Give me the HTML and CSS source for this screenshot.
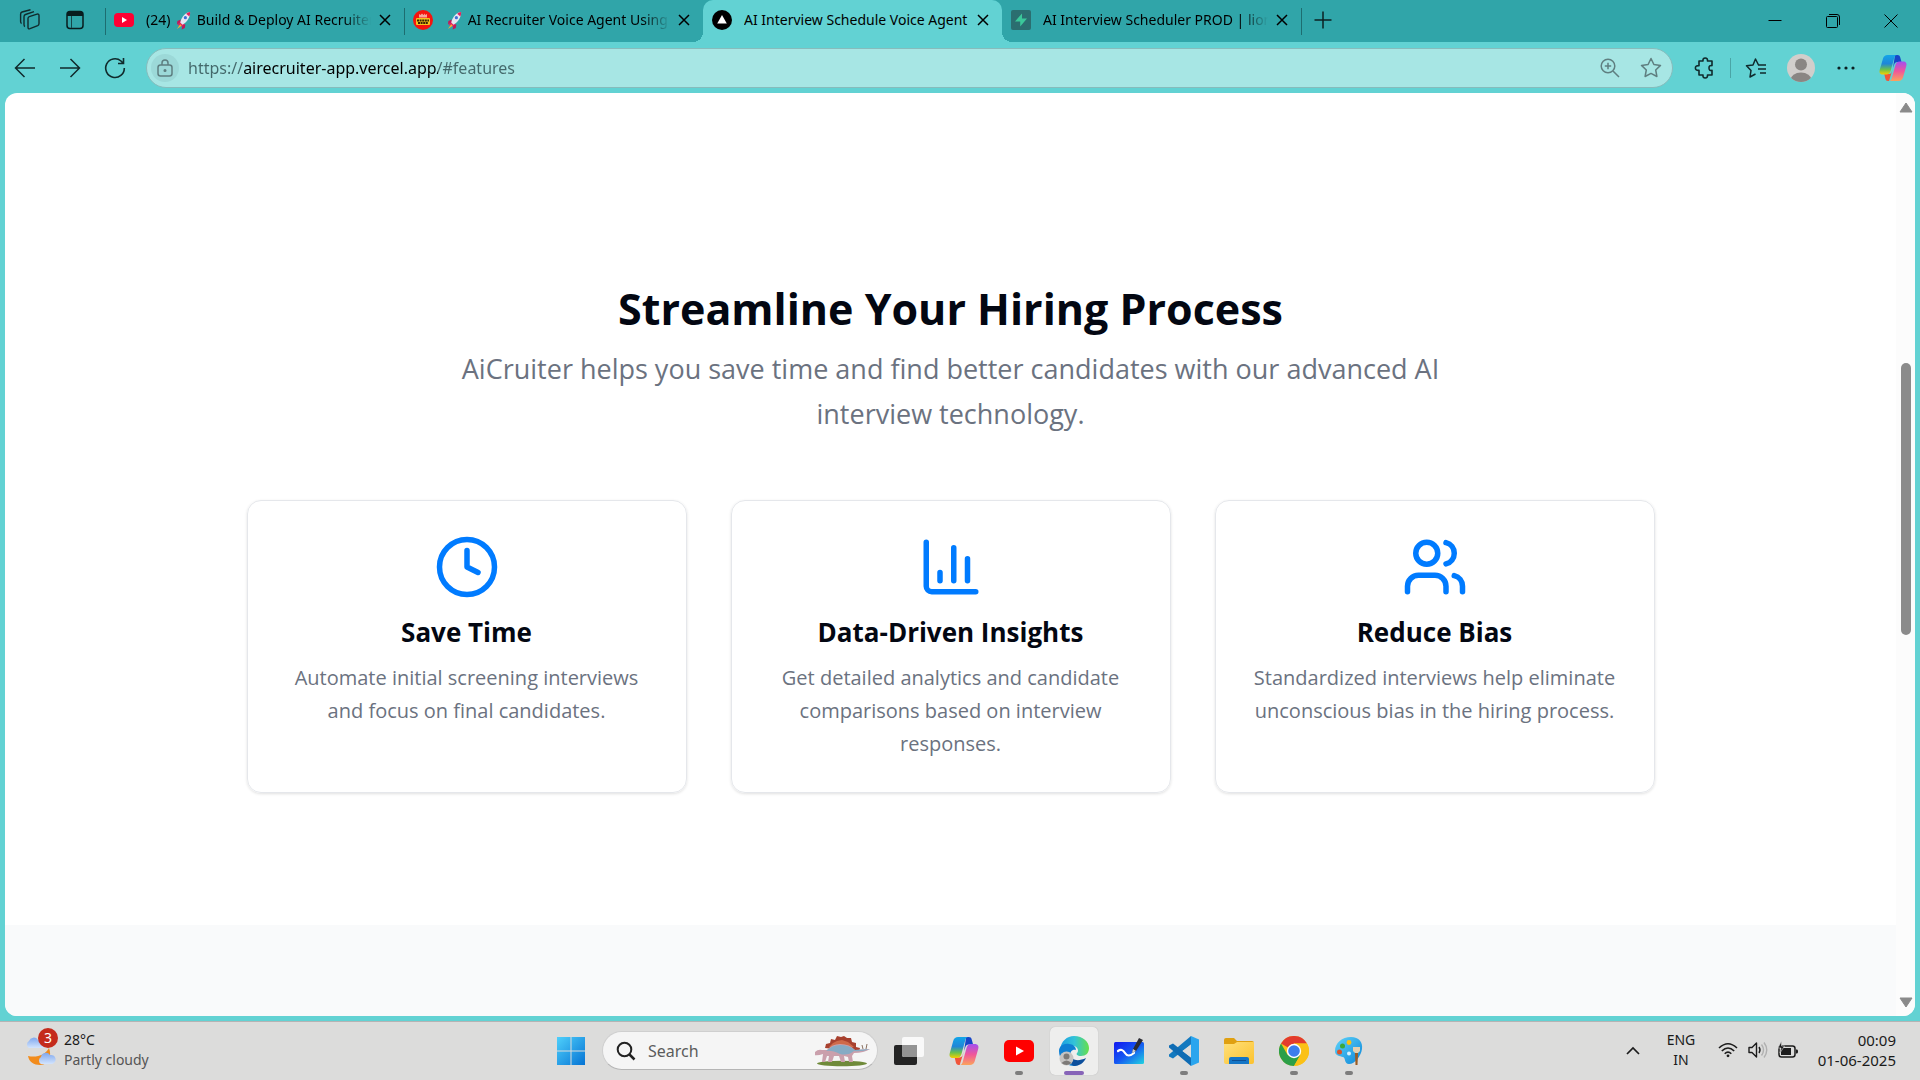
FILE: index.html
```html
<!DOCTYPE html>
<html lang="en">
<head>
<meta charset="utf-8">
<meta name="viewport" content="width=device-width, initial-scale=1">
<title>AI Interview Schedule Voice Agent</title>
<link rel="stylesheet" href="styles.css">
</head>
<body>
<svg class="defs" width="0" height="0" aria-hidden="true">
  <defs>
    <linearGradient id="cp-a" x1="0" y1="0" x2="0" y2="1"><stop offset="0" stop-color="#12a5e8"/><stop offset=".45" stop-color="#1f86d8"/><stop offset=".75" stop-color="#6cc24a"/><stop offset="1" stop-color="#f5d000"/></linearGradient>
    <linearGradient id="cp-b" x1="0" y1="0" x2="0" y2="1"><stop offset="0" stop-color="#a34ff0"/><stop offset=".5" stop-color="#f0569a"/><stop offset="1" stop-color="#fba35c"/></linearGradient>
    <linearGradient id="win" x1="0" y1="0" x2="1" y2="1"><stop offset="0" stop-color="#4fd0fb"/><stop offset="1" stop-color="#0573d4"/></linearGradient>
    <linearGradient id="edge-a" x1="0" y1="0" x2="1" y2="0"><stop offset="0" stop-color="#1b9de2"/><stop offset=".5" stop-color="#33c3d8"/><stop offset="1" stop-color="#66e04a"/></linearGradient>
    <linearGradient id="wb" x1="0" y1="0" x2="1" y2="1"><stop offset="0" stop-color="#1218f0"/><stop offset=".5" stop-color="#1457f2"/><stop offset="1" stop-color="#22d4e0"/></linearGradient>
    <linearGradient id="fold" x1="0" y1="0" x2="1" y2="1"><stop offset="0" stop-color="#ffe07a"/><stop offset="1" stop-color="#fcc22e"/></linearGradient>
    <linearGradient id="paint" x1="0" y1="0" x2="1" y2="1"><stop offset="0" stop-color="#5fd4fa"/><stop offset="1" stop-color="#0c86d8"/></linearGradient>
    <linearGradient id="cloud" x1="0" y1="0" x2="0" y2="1"><stop offset="0" stop-color="#7fa8ee"/><stop offset="1" stop-color="#d3e4fd"/></linearGradient>
    <symbol id="copilot" viewBox="0 0 28 28">
      <path d="M16 1h2.500c1.500 0 2.300.8 2.700 2.200L22.500 8h-4c-2 0-2.800 1-3.300 2.600L14 14z" fill="#1746c8"/>
      <path d="M10 27h-1c-1.500 0-2.200-.8-2.600-2.200L5.300 20h4.200c2 0 2.800-1 3.300-2.600L14 14z" fill="#f1553a"/>
      <path d="M8.500 1H18c-1.500 0-2.200 1-2.700 2.500L11.600 17c-.7 2.200-1.800 3.500-4.300 3.500H4C1 20.500 0 18.500.7 16L4 4.500C4.700 2.200 6.200 1 8.500 1z" fill="url(#cp-a)"/>
      <path d="M19.500 27H10c1.500 0 2.200-1 2.700-2.500L16.400 11c.7-2.200 1.800-3.500 4.300-3.500H24c3 0 4 2 3.300 4.500L24 23.500c-.7 2.300-2.200 3.500-4.500 3.500z" fill="url(#cp-b)"/>
    </symbol>
    <symbol id="rocket" viewBox="0 0 16 20">
      <path d="M1.500 14.500L5 10l5 5-4.500 1.500z" fill="#e0245e"/>
      <path d="M4.500 12C6 6 10 1.500 15 1c.5 5-3 10.500-8 13.500z" fill="#e6e7f2"/>
      <path d="M15 1c-1.600.2-3 .8-4.200 1.800l3.400 3C15 4.200 15.200 2.500 15 1z" fill="#e0245e"/>
      <circle cx="10" cy="7" r="1.700" fill="#3f6fd8"/>
      <path d="M5 9L1.500 10.500 1 14l3-1.500zM10 14l-.6 4L6 19.500l.7-4z" fill="#c2185b"/>
      <path d="M4.500 14L1 19l5-3.500z" fill="#ffb02e"/>
    </symbol>
    <symbol id="close" viewBox="0 0 12 12"><path d="M1 1l10 10M11 1L1 11" fill="none" stroke="currentColor" stroke-width="1.500"/></symbol>
    <symbol id="youtube" viewBox="0 0 30 22"><rect width="30" height="22" rx="5" fill="#f00"/><path d="M12 6.500v9l8-4.500z" fill="#fff"/></symbol>
  </defs>
</svg>

<header class="tabstrip">
  <div class="strip-tools">
    <button class="bare" aria-label="Workspaces"><svg width="22" height="22" viewBox="0 0 22 22" fill="none" stroke="#102a2c" stroke-width="1.400" stroke-linejoin="round"><path d="M9 9.500q0-1.500 1.300-1.900l7.700-2.500q2-.5 2 1.500v8q0 1.500-1.300 2.100l-7.700 3q-2 .6-2-1.400z"/><path d="M6 17.500q-1-.4-1-2V7.700q0-1.600 1.500-2.200L15 2.600M2.600 14.500q-1-.5-1-2V5.200q0-1.600 1.500-2.200L11.500.8"/></svg></button>
    <button class="bare" aria-label="Tab actions"><svg width="20" height="20" viewBox="0 0 20 20"><rect x="2" y="1.500" width="16" height="17" rx="3" fill="none" stroke="#081c1e" stroke-width="1.500"/><path d="M2 6V4q0-2.500 3-2.500h10q3 0 3 2.500v2z" fill="#081c1e"/><path d="M6.500 6v12" stroke="#17464a"/></svg></button>
  </div>
  <nav class="tabs" aria-label="Open tabs">
    <div class="tab">
      <svg class="favicon" width="20" height="20" viewBox="0 0 20 20"><rect y="3" width="20" height="14" rx="4" fill="#ff0033"/><path d="M8 7v6l5-3z" fill="#fff"/></svg>
      <button class="tab-title">(24) <svg class="emoji" width="15" height="19"><use href="#rocket"/></svg> Build &amp; Deploy AI Recruiter Voice Agent</button>
      <button class="bare" aria-label="Close tab"><svg width="12" height="12"><use href="#close"/></svg></button>
    </div>
    <div class="tab">
      <svg class="favicon" width="20" height="20" viewBox="0 0 20 20"><circle cx="10" cy="10" r="10" fill="#f5140e"/><path d="M6 7.500V4l1.500 1L9 3.500 10.500 5 12 3.500V5l2-1v3.500z" fill="#f7a79a"/><rect x="3" y="8" width="14" height="7" rx="1" fill="#f6c21c"/><path d="M4 10.500h12M5 13h10" stroke="#3b2500" stroke-width="1.800" stroke-dasharray="2 .6"/></svg>
      <button class="tab-title"><svg class="emoji" width="15" height="19"><use href="#rocket"/></svg> AI Recruiter Voice Agent Using Next.js</button>
      <button class="bare" aria-label="Close tab"><svg width="12" height="12"><use href="#close"/></svg></button>
    </div>
    <div class="tab active">
      <svg class="favicon" width="20" height="20" viewBox="0 0 20 20"><circle cx="10" cy="10" r="10" fill="#000"/><path d="M10 5l4.800 8.500H5.200z" fill="#fff"/></svg>
      <button class="tab-title full" aria-current="page">AI Interview Schedule Voice Agent</button>
      <button class="bare" aria-label="Close tab"><svg width="12" height="12"><use href="#close"/></svg></button>
    </div>
    <div class="tab">
      <svg class="favicon" width="20" height="20" viewBox="0 0 20 20"><rect width="20" height="20" rx="2" fill="#2b6e70"/><path d="M11 3.500L4 11.500h5.200v5L16 8.500h-5z" fill="#3bc79a"/></svg>
      <button class="tab-title">AI Interview Scheduler PROD | lionheart</button>
      <button class="bare" aria-label="Close tab"><svg width="12" height="12"><use href="#close"/></svg></button>
    </div>
    <button class="bare new-tab" aria-label="New tab"><svg width="18" height="18" viewBox="0 0 18 18" stroke="#0b2022" stroke-width="1.500"><path d="M9 .5v17M.5 9h17"/></svg></button>
  </nav>
  <div class="window-controls">
    <button class="bare" aria-label="Minimize"><svg width="14" height="14" viewBox="0 0 14 14" stroke="#000"><path d="M.5 6.500h13"/></svg></button>
    <button class="bare" aria-label="Restore"><svg width="14" height="14" viewBox="0 0 14 14" fill="none" stroke="#000"><rect x=".5" y="2.500" width="11" height="11" rx="1"/><path d="M3 .5h8q2.500 0 2.500 2.500v8"/></svg></button>
    <button class="bare" aria-label="Close window"><svg width="14" height="14" viewBox="0 0 14 14" stroke="#000"><path d="M.5.5l13 13M13.500.5l-13 13"/></svg></button>
  </div>
</header>

<div class="toolbar">
  <div class="nav-buttons">
    <button class="bare" aria-label="Back"><svg width="22" height="20" viewBox="0 0 22 20" fill="none" stroke="#102a2c" stroke-width="1.500"><path d="M21 10H2M10.500 1l-9 9 9 9"/></svg></button>
    <button class="bare" aria-label="Forward"><svg width="22" height="20" viewBox="0 0 22 20" fill="none" stroke="#102a2c" stroke-width="1.500"><path d="M1 10h19M11.500 1l9 9-9 9"/></svg></button>
    <button class="bare" aria-label="Refresh"><svg width="22" height="22" viewBox="0 0 22 22" fill="none" stroke="#102a2c" stroke-width="1.600"><path d="M20.300 11A9.300 9.300 0 1 1 17 4l2 2M19.500 1v5.500H14"/></svg></button>
  </div>
  <div class="address">
    <button class="bare lock" aria-label="Site information"><svg width="16" height="18" viewBox="0 0 16 18" fill="none" stroke="#5d7f80" stroke-width="1.500"><rect x="1" y="6" width="14" height="11" rx="2.500"/><path d="M5 6V4a3 3 0 0 1 6 0v2"/><circle cx="8" cy="11.500" r=".8" fill="#5d7f80"/></svg></button>
    <input class="url" type="text" aria-label="Address" value="https://airecruiter-app.vercel.app/#features">
    <button class="bare" aria-label="Zoom"><svg width="20" height="20" viewBox="0 0 20 20" fill="none" stroke="#5f7f80" stroke-width="1.500"><circle cx="8" cy="8" r="6.800"/><path d="M13 13l6 6M8 4.800v6.400M4.800 8h6.400"/></svg></button>
    <button class="bare" aria-label="Add to favorites"><svg width="22" height="22" viewBox="0 0 22 22" fill="none" stroke="#5f7f80" stroke-width="1.500" stroke-linejoin="round"><path d="M11 1.500l2.900 6 6.600.9-4.800 4.600 1.200 6.500L11 16.400l-5.900 3.100L6.300 13 1.500 8.400l6.600-.9z"/></svg></button>
  </div>
  <div class="toolbar-actions">
    <button class="bare" aria-label="Extensions"><svg width="22" height="22" viewBox="0 0 22 22" fill="none" stroke="#102a2c" stroke-width="1.600" stroke-linejoin="round"><path d="M5 4h4q-.4-3 2.200-3t2.300 3H18v4.600q-3-.5-3 2.400t3 2.400V18h-4.500q.3 3-2.300 3T9 18H5v-4.600q-3.600.2-3.600-2.400T5 8.600z"/></svg></button>
    <span class="divider"></span>
    <button class="bare" aria-label="Favorites"><svg width="22" height="20" viewBox="0 0 22 20" fill="none" stroke="#102a2c" stroke-width="1.500" stroke-linejoin="round"><path d="M13.500 7L10.500 1 8 7l-6.500.8L6 12.500 5 19l5.500-3M13 7h8M13 11h8M15 15h6"/></svg></button>
    <button class="bare profile" aria-label="Profile"><svg width="28" height="28" viewBox="0 0 28 28"><clipPath id="av"><circle cx="14" cy="14" r="14"/></clipPath><g clip-path="url(#av)"><rect width="28" height="28" fill="#d1cecb"/><circle cx="14" cy="10.500" r="6" fill="#8a8683"/><ellipse cx="14" cy="26" rx="10.500" ry="7.500" fill="#8a8683"/></g></svg></button>
    <button class="bare" aria-label="Settings and more"><svg width="18" height="4" viewBox="0 0 18 4" fill="#0b2022"><circle cx="2" cy="2" r="1.600"/><circle cx="9" cy="2" r="1.600"/><circle cx="16" cy="2" r="1.600"/></svg></button>
    <button class="bare assistant" aria-label="Copilot"><svg width="28" height="28"><use href="#copilot"/></svg></button>
  </div>
</div>

<div class="viewport">
  <main class="page">
    <section class="features" id="features">
      <h2>Streamline Your Hiring Process</h2>
      <p class="lead">AiCruiter helps you save time and find better candidates with our advanced AI interview technology.</p>
      <div class="cards">
        <article class="card">
          <svg class="card-icon" viewBox="0 0 24 24"><circle cx="12" cy="12" r="10"/><path d="M12 6v6l4 2"/></svg>
          <h3>Save Time</h3>
          <p>Automate initial screening interviews and focus on final candidates.</p>
        </article>
        <article class="card">
          <svg class="card-icon" viewBox="0 0 24 24"><path d="M3 3v16a2 2 0 0 0 2 2h16M18 17V9M13 17V5M8 17v-3"/></svg>
          <h3>Data-Driven Insights</h3>
          <p>Get detailed analytics and candidate comparisons based on interview responses.</p>
        </article>
        <article class="card">
          <svg class="card-icon" viewBox="0 0 24 24"><path d="M16 21v-2a4 4 0 0 0-4-4H6a4 4 0 0 0-4 4v2"/><circle cx="9" cy="7" r="4"/><path d="M22 21v-2a4 4 0 0 0-3-3.870M16 3.130a4 4 0 0 1 0 7.750"/></svg>
          <h3>Reduce Bias</h3>
          <p>Standardized interviews help eliminate unconscious bias in the hiring process.</p>
        </article>
      </div>
    </section>
    <section class="next-section"></section>
  </main>
  <div class="scrollbar" aria-hidden="true">
    <svg width="14" height="11" viewBox="0 0 14 11"><path d="M7 1l6 9H1z" fill="#8a8a8a" stroke="#8a8a8a" stroke-linejoin="round"/></svg>
    <div class="track"><div class="thumb"></div></div>
    <svg width="14" height="11" viewBox="0 0 14 11"><path d="M7 10l6-9H1z" fill="#8a8a8a" stroke="#8a8a8a" stroke-linejoin="round"/></svg>
  </div>
</div>

<footer class="taskbar">
  <button class="bare weather">
    <svg width="31" height="36" viewBox="0 0 31 36"><path d="M3 24c9 2 17-1 21-8 3 8 0 17-9 17-6 0-11-3-12-9z" fill="#f28c1c"/><path d="M4 16a4 4 0 0 1 0-7 5 5 0 0 1 9-1 4 4 0 0 1 5 8z" fill="url(#cloud)"/><path d="M16 32a4 4 0 0 1 0-7 5 5 0 0 1 9-2 4.500 4.500 0 0 1 2 9z" fill="url(#cloud)"/></svg>
    <span class="badge">3</span>
    <span class="stack"><span>28°C</span><span class="muted">Partly cloudy</span></span>
  </button>
  <div class="apps">
    <button class="app" aria-label="Start"><svg width="30" height="30" viewBox="0 0 30 30" fill="url(#win)"><path d="M1 1h13.500v13.500H1zM15.500 1H29v13.500H15.500zM1 15.500h13.500V29H1zM15.500 15.500H29V29H15.500z"/></svg></button>
    <label class="search">
      <svg width="20" height="20" viewBox="0 0 20 20" fill="none" stroke="#222" stroke-width="2"><circle cx="8.500" cy="8.500" r="6.800"/><path d="M13.500 13.500l5 5" stroke-width="2.500"/></svg>
      <input type="text" placeholder="Search" aria-label="Search">
      <svg width="56" height="32" viewBox="0 0 56 32"><ellipse cx="27" cy="28.500" rx="25" ry="2.800" fill="#6f8a3a"/><path d="M10 13l1-4 4-1 1-4 4 1 2-4 4 1 3-1 3 2 4 0 1 4 4 1 0 4 4 1-1 4z" fill="#a8412f"/><path d="M14 12l4-4 4-2 5-1 6 2 6 5-20 3z" fill="#cf6a4a"/><path d="M0 17q3-3 7-2l5 0q5-6 13-6 10 0 15 6l15-1q-6 4-16 4l-2 3 1 6h-4l-1-5-4-1 1 6h-4l-2-6-5 0-2 6h-4l1-6-2 0-2 6h-3l1-8q-5 2-10 1z" fill="#caa0ac"/><path d="M11 16q6-6 14-6 9 0 15 5l15-1q-8 3-16 2-6 5-14 3-8-4-14-3z" fill="#86abc4"/><path d="M48 14l-1-4M51 14l1-5" stroke="#8a7060"/></svg>
    </label>
    <button class="app" aria-label="Task view"><svg width="32" height="30" viewBox="0 0 32 30"><rect x="1" y="9" width="23" height="20" rx="2" fill="#242424"/><rect x="9" y="1" width="22" height="20" rx="2" fill="#fff" opacity=".82"/><path d="M9 9h15v12H11q-2 0-2-2z" fill="#949494"/></svg></button>
    <button class="app" aria-label="Copilot"><svg width="32" height="30"><use href="#copilot"/></svg></button>
    <button class="app running" aria-label="YouTube"><svg width="30" height="22"><use href="#youtube"/></svg></button>
    <button class="app running current" aria-label="Microsoft Edge"><svg width="30" height="30" viewBox="0 0 30 30"><path d="M1 14C2 5 8 0 15 0c9 0 15 6 15 12 0 5-3 8-8 8-4 0-5-2-4-3 2-2 1-6-3-7C9 8 3 10 1 14z" fill="url(#edge-a)"/><path d="M0 15c0-5 5-8 10-7 4 0 7 3 7 6-4-1-6 2-6 6 0 5 4 9 8 10C8 31 0 25 0 15z" fill="#0f7fd3"/><path d="M11 19c1 5 8 7 16 3-2 5-7 8-12 8-4-2-6-6-4-11z" fill="#0c4f9c"/><circle cx="7.500" cy="22.500" r="7" fill="#c6c4c2"/><circle cx="7.500" cy="20.500" r="3" fill="#7d7a77"/><path d="M2.500 27q5-5 10 0-5 4-10 0z" fill="#7d7a77"/></svg></button>
    <button class="app" aria-label="Whiteboard"><svg width="30" height="28" viewBox="0 0 30 28"><rect y="5" width="30" height="22" rx="1.500" fill="url(#wb)"/><path d="M4 14q4-3 7 2t9 0" fill="none" stroke="#fff" stroke-width="2.200" stroke-linecap="round"/><path d="M25 1l4 2-7 11-4 2 1-4z" fill="#2b2b33"/><path d="M19 12l3 2-4 2z" fill="#cfd2d8"/></svg></button>
    <button class="app running" aria-label="Visual Studio Code"><svg width="30" height="30" viewBox="0 0 30 30"><path d="M22 0l8 3.500v23L22 30z" fill="#2aa5ee"/><path d="M22 0v8.500L4 22.500 0 20.500v-2z" fill="#1379bf"/><path d="M22 30v-8.500L4 7.500 0 9.500v2z" fill="#0f6cb4"/><path d="M22 8.500L13.500 15l8.500 6.500z" fill="#dcdcdc"/></svg></button>
    <button class="app" aria-label="File Explorer"><svg width="30" height="26" viewBox="0 0 30 26"><path d="M0 2q0-2 2-2h8l3 3h15q2 0 2 2v6H0z" fill="#e0a010"/><path d="M0 6h10l3-2h17v20q0 2-2 2H2q-2 0-2-2z" fill="url(#fold)"/><path d="M5 26v-5q0-2 2-2h16q2 0 2 2v5z" fill="#1576c6"/><path d="M8 22.500h14" stroke="#0d4f94"/></svg></button>
    <button class="app running" aria-label="Google Chrome"><svg width="30" height="30" viewBox="0 0 30 30"><circle cx="15" cy="15" r="15" fill="#fbc116"/><path d="M15 15L2 7.500A15 15 0 0 1 28 7.500H15z" fill="#e33b2e"/><path d="M2 7.500A15 15 0 0 0 15 30l6.500-11.200L8.500 18.800z" fill="#2c9f48"/><path d="M28 7.500H15v7.500l6.500 3.800L15 30A15 15 0 0 0 28 7.500z" fill="#fbc116"/><circle cx="15" cy="15" r="7.200" fill="#fff"/><circle cx="15" cy="15" r="5.800" fill="#3b7ded"/></svg></button>
    <button class="app running" aria-label="Paint"><svg width="30" height="30" viewBox="0 0 30 30"><path d="M17 1c8 0 12 5 11 12S21 28 15 28c-5 0-3-6-6-7S1 20 1 15C1 7 8 1 17 1z" fill="url(#paint)"/><circle cx="15" cy="6.500" r="2.400" fill="#fbc116"/><circle cx="8.500" cy="10" r="2.500" fill="#3aa83a"/><circle cx="5.500" cy="16" r="2.500" fill="#d9532c"/><circle cx="15" cy="17.500" r="2" fill="#d9f1fc"/><path d="M19 11h7v4l-2 2h-3l-2-2z" fill="#e3cfae"/><path d="M21 17h3l-.5 12h-2z" fill="#9a5b23"/></svg></button>
  </div>
  <div class="tray">
    <button class="bare chevron" aria-label="Show hidden icons"><svg width="14" height="9" viewBox="0 0 14 9" fill="none" stroke="#1c1c1c" stroke-width="1.700"><path d="M1 8l6-6 6 6"/></svg></button>
    <button class="bare stack lang"><span>ENG</span><span>IN</span></button>
    <button class="bare quick" aria-label="Network, volume and battery">
      <svg width="20" height="16" viewBox="0 0 20 16" fill="none" stroke="#1c1c1c" stroke-width="1.600"><path d="M1 6q9-8.500 18 0M3.800 9q6.200-6 12.400 0M6.700 11.800q3.300-3.200 6.600 0"/><circle cx="10" cy="13.800" r="1.400" fill="#1c1c1c" stroke="none"/></svg>
      <svg width="20" height="18" viewBox="0 0 20 18" fill="none" stroke="#1c1c1c" stroke-width="1.400" stroke-linejoin="round"><path d="M1 6.500h3L8.500 2v14L4 11.500H1zM11 6q2 3 0 6"/><path d="M13.500 3.500q4 5.500 0 11M16 1.500q5.500 7.500 0 15" stroke="#b0b0b0"/></svg>
      <svg width="20" height="18" viewBox="0 0 20 18"><rect x="1" y="5" width="16" height="11" rx="2.500" fill="none" stroke="#1c1c1c" stroke-width="1.500"/><rect x="3" y="7" width="10" height="7" fill="#1c1c1c"/><path d="M18 8.500h1q1 0 1 2t-1 2h-1z" fill="#1c1c1c"/><path d="M3.500 0L0 7h3l-1 5 4.500-7h-3z" fill="#1c1c1c" stroke="#ddd" stroke-width=".6"/></svg>
    </button>
    <button class="bare stack clock"><span>00:09</span><span>01-06-2025</span></button>
  </div>
</footer>
</body>
</html>
```
FILE: styles.css
```css
* { box-sizing: border-box; }

body {
  margin: 0;
  min-height: 100vh;
  display: flex;
  flex-direction: column;
  background: #62d2d3;
  font-family: "Open Sans", "Noto Sans", sans-serif;
  color: #030712;
}

.defs { position: absolute; }

svg { display: block; flex: none; }

button, input { font: inherit; color: inherit; }

.bare {
  display: flex;
  align-items: center;
  justify-content: center;
  padding: 0;
  border: 0;
  background: none;
}

/* Tab strip */
.tabstrip {
  display: flex;
  height: 42px;
  background: #30a5a9;
  font-family: "Noto Sans", sans-serif;
  font-size: 14px;
  line-height: 20px;
  color: #000;
}

.strip-tools {
  display: flex;
  align-items: center;
  gap: 24px;
  width: 105px;
  padding: 0 0 2px 19px;
}

.tabs { display: flex; flex: 1; min-width: 0; }

.tab {
  position: relative;
  display: flex;
  align-items: center;
  flex: 0 1 299px;
  min-width: 0;
  padding: 0 13px 2px 8px;
  border-left: 1px solid transparent;
  border-image: linear-gradient(transparent 9px, #1d6d70 9px, #1d6d70 34px, transparent 34px) 1;
}

.tab.active,
.tab.active + .tab { border-image: none; }

.tab.active {
  background: #62d2d3;
  border-radius: 10px 10px 0 0;
}

.tab.active::before,
.tab.active::after {
  content: "";
  position: absolute;
  bottom: 0;
  width: 10px;
  height: 10px;
}

.tab.active::before { left: -11px; background: radial-gradient(circle at 0 0, #30a5a9 10px, #62d2d3 10px); }
.tab.active::after { right: -10px; background: radial-gradient(circle at 100% 0, #30a5a9 10px, #62d2d3 10px); }

.favicon { margin-right: 12px; }

.tab-title {
  flex: 1;
  min-width: 0;
  margin-right: 8px;
  padding: 0;
  border: 0;
  background: none;
  overflow: hidden;
  text-align: left;
  white-space: nowrap;
  mask-image: linear-gradient(90deg, #000 calc(100% - 28px), transparent);
}

.tab-title.full { mask-image: none; }

.emoji { display: inline-block; margin: 0 2px; vertical-align: middle; }

.new-tab {
  padding: 0 14px 2px 12px;
  border-left: 1px solid transparent;
  border-image: linear-gradient(transparent 9px, #1d6d70 9px, #1d6d70 34px, transparent 34px) 1;
}

.window-controls { display: flex; }
.window-controls .bare { width: 58px; }

/* Toolbar */
.toolbar {
  display: flex;
  align-items: center;
  height: 51px;
  color: #1f4b4d;
}

.nav-buttons {
  display: flex;
  gap: 23px;
  width: 146px;
  padding-left: 14px;
}

.address {
  display: flex;
  align-items: center;
  flex: 1;
  gap: 20px;
  height: 40px;
  padding: 0 10px 0 4px;
  border: 1px solid #86bcbc;
  border-radius: 20px;
  background: #a7e6e4;
}

.lock {
  width: 28px;
  height: 28px;
  border-radius: 50%;
  background: #9cd9d8;
}

.url {
  flex: 1;
  min-width: 0;
  margin-left: -11px;
  padding: 0;
  border: 0;
  outline: 0;
  font-family: "Noto Sans", sans-serif;
  font-size: 16px;
  line-height: 24px;
  background: linear-gradient(90deg, #43686a 56px, #000 56px, #000 250px, #43686a 250px);
  background-clip: text;
  -webkit-background-clip: text;
  -webkit-text-fill-color: transparent;
}

.toolbar-actions {
  display: flex;
  align-items: center;
  justify-content: flex-end;
  gap: 14px;
  width: 247px;
  padding-right: 13px;
}

.profile { margin: 0 8px 0 6px; }
.assistant { margin-left: 10px; }

.divider { width: 1px; height: 20px; background: #4aa5a6; }

/* Page */
.viewport {
  display: flex;
  flex: 1;
  margin: 0 5px 5px;
  border-radius: 12px;
  background: #fff;
  overflow: hidden;
}

.page {
  display: flex;
  flex-direction: column;
  flex: 1;
  min-width: 0;
}

.features {
  padding: 188px 24px 132px;
  text-align: center;
}

h2, h3, p { margin: 0; }

h2 {
  font-size: 43px;
  line-height: 55px;
  font-weight: 700;
}

.lead {
  max-width: 1056px;
  margin: 10px auto 64px;
  font-size: 27px;
  line-height: 45px;
  color: #6b7280;
}

.cards {
  display: grid;
  grid-template-columns: repeat(3, 1fr);
  gap: 44px;
  max-width: 1408px;
  margin: 0 auto;
}

.card {
  display: flex;
  flex-direction: column;
  align-items: center;
  padding: 33px 33px 32px;
  border: 1px solid #e5e7eb;
  border-radius: 14px;
  box-shadow: 0 1px 3px rgba(0, 0, 0, .12);
}

.card-icon {
  width: 66px;
  height: 66px;
  fill: none;
  stroke: #007bff;
  stroke-width: 2;
  stroke-linecap: round;
  stroke-linejoin: round;
}

h3 {
  margin: 13px 0 10px;
  font-size: 26px;
  line-height: 38px;
  font-weight: 700;
}

.card p {
  font-size: 20px;
  line-height: 33px;
  color: #6b7280;
}

.next-section { flex: 1; min-height: 64px; background: #f9fafb; }

.scrollbar {
  display: flex;
  flex-direction: column;
  align-items: center;
  width: 19px;
  padding: 9px 0 8px;
  background: #fcfcfc;
}

.track { flex: 1; padding-top: 250px; }

.thumb {
  width: 10px;
  height: 272px;
  border-radius: 5px;
  background: #8b8b8b;
}

/* Taskbar */
.taskbar {
  display: grid;
  grid-template-columns: 1fr auto 1fr;
  height: 59px;
  border-top: 1px solid #b4b4b4;
  background: #dcdcdb;
  font-family: "Noto Sans", sans-serif;
  font-size: 14px;
  line-height: 20px;
  color: #1a1a1a;
}

.stack { display: flex; flex-direction: column; text-align: left; }
.muted { color: #555; }

.weather {
  position: relative;
  justify-self: start;
  gap: 8px;
  padding: 0 24px 2px 25px;
}

.badge {
  position: absolute;
  left: 38px;
  top: 6px;
  width: 20px;
  height: 20px;
  border-radius: 50%;
  background: #c42b1c;
  color: #fff;
}

.apps { display: flex; align-items: center; gap: 7px; padding-bottom: 1px; }

.app {
  position: relative;
  display: flex;
  align-items: center;
  justify-content: center;
  width: 48px;
  height: 48px;
  padding: 0;
  border: 0;
  border-radius: 5px;
  background: none;
}

.app.current { background: #eeeeed; box-shadow: 0 0 1px #aaa; }

.app.running::after {
  content: "";
  position: absolute;
  left: 20px;
  bottom: 0;
  width: 8px;
  height: 4px;
  border-radius: 2px;
  background: #7d7d7d;
}

.app.current::after { left: 14px; width: 20px; background: #8764b8; }

.search {
  display: flex;
  align-items: center;
  gap: 12px;
  width: 276px;
  height: 39px;
  padding: 0 6px 0 13px;
  border: 1px solid #cfcfcf;
  border-bottom-color: #b5b5b5;
  border-radius: 20px;
  background: #f5f5f5;
}

.search input {
  flex: 1;
  min-width: 0;
  padding: 0;
  border: 0;
  outline: 0;
  background: none;
  font-size: 16px;
}

.search input::placeholder { color: #5c5c5c; opacity: 1; }

.tray {
  display: flex;
  align-items: center;
  justify-content: flex-end;
  padding: 0 24px 2px 0;
}

.chevron { margin-right: 26px; }
.lang { width: 30px; margin-right: 22px; }
.quick { gap: 10px; margin-right: 18px; }
.clock { align-items: flex-end; width: 80px; font-size: 15px; }
```
